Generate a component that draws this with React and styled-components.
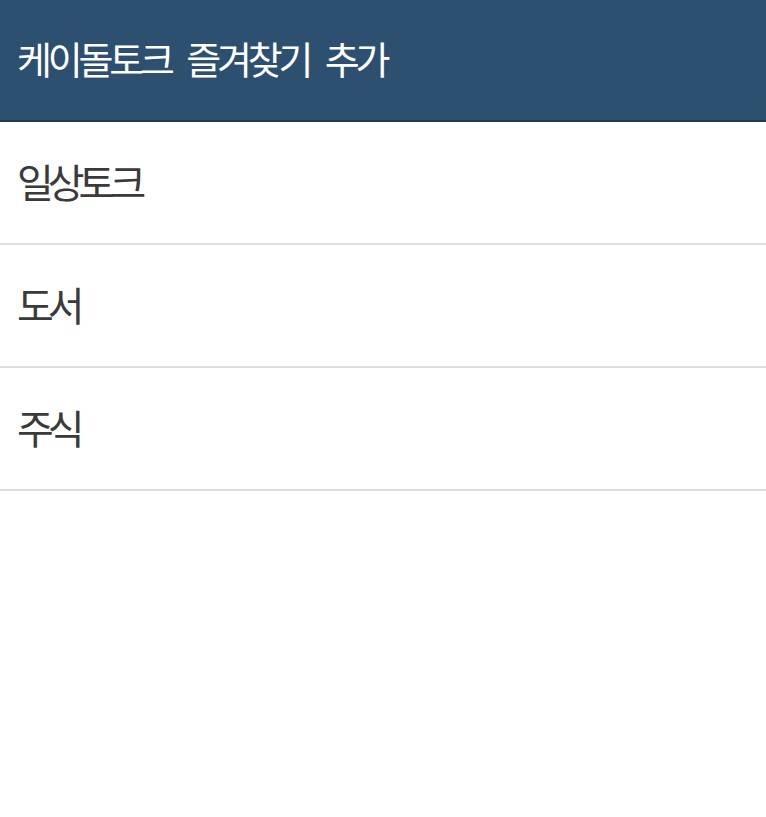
import styled, { createGlobalStyle } from 'styled-components';

const GlobalStyle = createGlobalStyle`
  html, body {
    margin: 0;
    padding: 0;
    background: #ffffff;
  }
  body {
    font-family: 'Noto Sans CJK KR', 'Noto Sans', sans-serif;
  }
`;

// 즐겨찾기에 추가할 수 있는 게시판 목록
const boards = ['일상토크', '도서', '주식'];

const App = () => {
  return (
    <>
      <GlobalStyle />
      <Page>
        <Header>
          <Title>케이돌토크 즐겨찾기 추가</Title>
        </Header>
        <BoardList>
          {boards.map((name) => (
            <BoardItem key={name}>{name}</BoardItem>
          ))}
        </BoardList>
      </Page>
    </>
  );
};

const Page = styled.div`
  width: 100%;
  min-height: 100vh;
  background: #ffffff;
`;

const Header = styled.header`
  display: flex;
  align-items: center;
  box-sizing: border-box;
  height: 122px;
  padding: 0 17px 5px;
  background: #2d4f70;
  border-bottom: 2px solid #213b56;
`;

const Title = styled.h1`
  margin: 0;
  font-size: 38px;
  font-weight: 400;
  letter-spacing: -0.11em;
  word-spacing: 11px;
  color: #ffffff;
`;

const BoardList = styled.ul`
  margin: 0;
  padding: 0;
  list-style: none;
`;

const BoardItem = styled.li`
  display: flex;
  align-items: center;
  box-sizing: border-box;
  height: 123px;
  padding: 0 17px 3px;
  font-size: 40px;
  font-weight: 400;
  letter-spacing: -0.15em;
  color: #3a3a3a;
  border-bottom: 2px solid #dddddd;
  cursor: pointer;
`;

export default App;
